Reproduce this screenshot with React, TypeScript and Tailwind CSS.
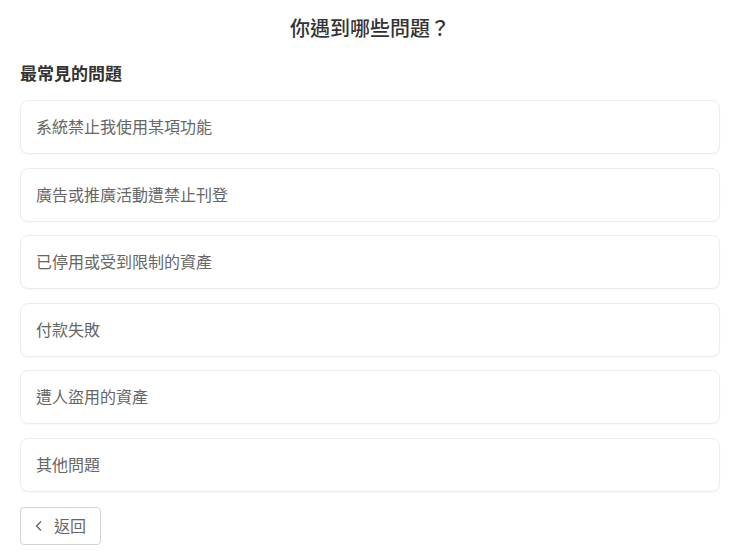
import React from 'react';

const issues = [
  '系統禁止我使用某項功能',
  '廣告或推廣活動遭禁止刊登',
  '已停用或受到限制的資產',
  '付款失敗',
  '遭人盜用的資產',
  '其他問題',
];

const App = () => {
  return (
    <div
      className="w-[740px] h-[557px] bg-white px-5 text-[#333]"
      style={{ fontFamily: '"Noto Sans", "Noto Sans CJK TC", sans-serif' }}
    >
      <h1 className="pt-[15px] h-[56px] text-center text-[20px] font-medium leading-[28px] text-[#333]">
        你遇到哪些問題？
      </h1>
      <h2 className="h-[44px] pt-[5px] text-[17px] font-bold leading-[26px] text-[#333]">
        最常見的問題
      </h2>
      <div className="flex w-[700px] flex-col gap-[13.6px]">
        {issues.map((item) => (
          <div
            key={item}
            className="flex h-[54px] items-center rounded-lg border border-[#ececec] bg-white pl-[15px] text-[16px] text-[#666] shadow-[0_1px_2px_rgba(0,0,0,0.03)]"
          >
            {item}
          </div>
        ))}
      </div>
      <button className="mt-[15px] flex h-[38px] w-[81px] items-center gap-[10px] rounded border border-[#d4d4d4] bg-white pl-[13px] text-[16px] text-[#666]">
        <svg width="10" height="12" viewBox="0 0 10 12" fill="none">
          <path d="M7 1.5L2.5 6L7 10.5" stroke="#666" strokeWidth="1.4" />
        </svg>
        返回
      </button>
    </div>
  );
};

export default App;
